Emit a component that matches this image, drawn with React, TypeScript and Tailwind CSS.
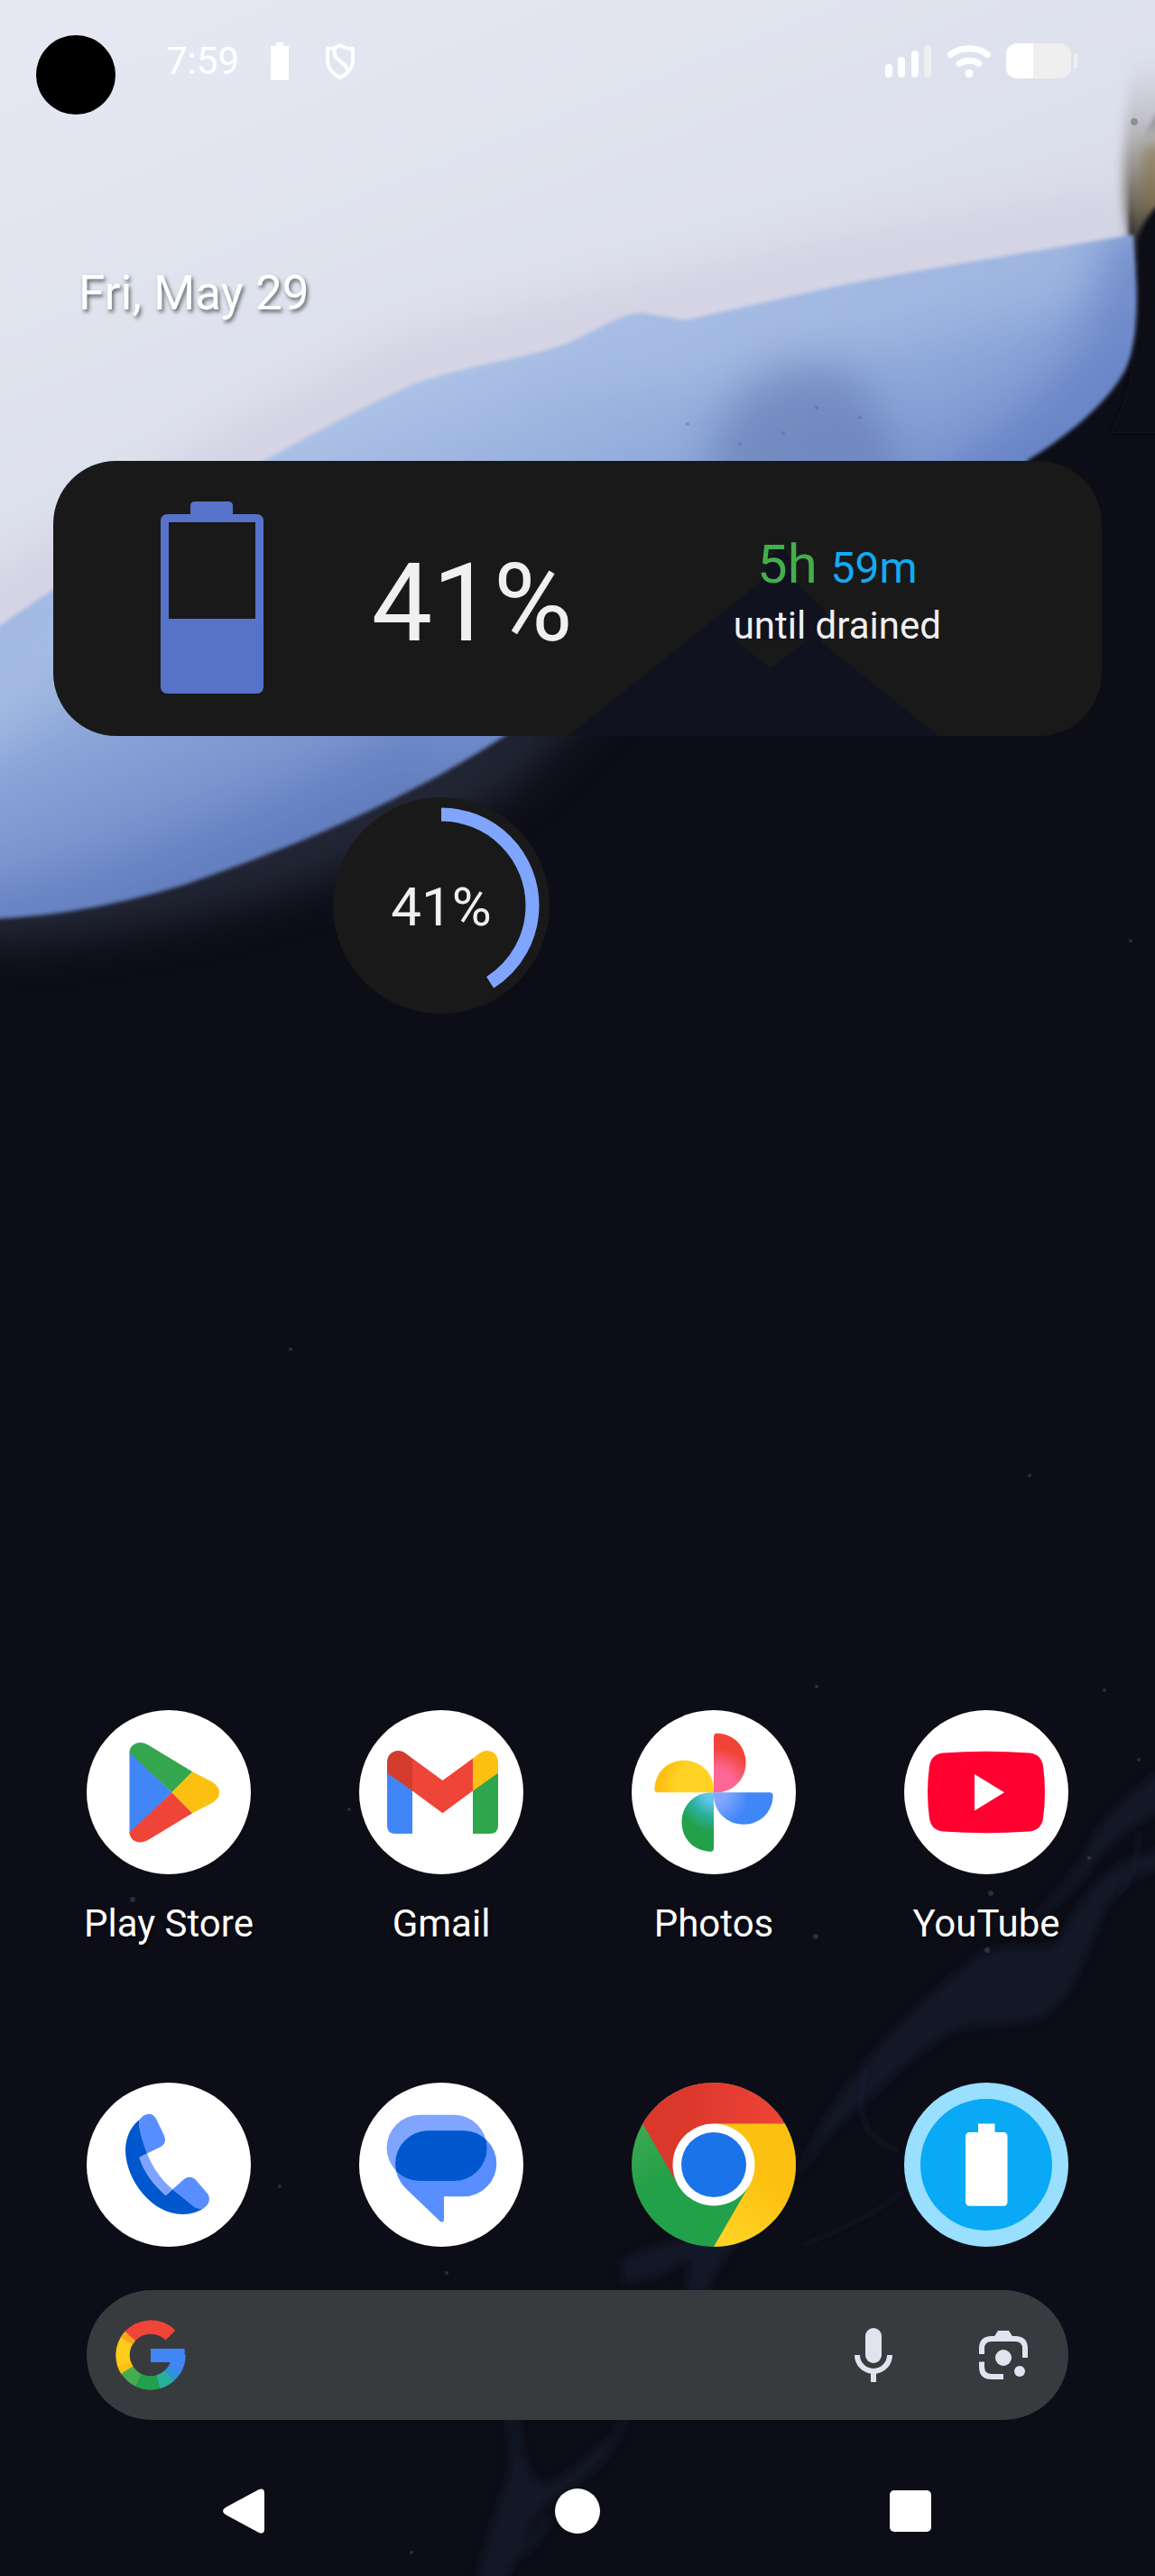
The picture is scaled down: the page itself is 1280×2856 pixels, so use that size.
const BATTERY_LEVEL = 41;

function Wallpaper() {
  return (
    <svg
      className="absolute inset-0 h-full w-full"
      viewBox="0 0 1280 2856"
      preserveAspectRatio="none"
      aria-hidden="true"
    >
      <defs>
        <linearGradient id="sky" x1="200" y1="0" x2="440" y2="600" gradientUnits="userSpaceOnUse">
          <stop offset="0" stopColor="#e5e8f3" />
          <stop offset="0.65" stopColor="#dee1ed" />
          <stop offset="1" stopColor="#d9dcea" />
        </linearGradient>
        <linearGradient id="wave" x1="380" y1="450" x2="560" y2="880" gradientUnits="userSpaceOnUse">
          <stop offset="0" stopColor="#adc2e6" />
          <stop offset="0.45" stopColor="#8ea8da" />
          <stop offset="0.85" stopColor="#6f8ac9" />
          <stop offset="1" stopColor="#617bb9" />
        </linearGradient>
        <linearGradient id="rock" x1="0" y1="60" x2="0" y2="290" gradientUnits="userSpaceOnUse">
          <stop offset="0" stopColor="#c9cbd8" stopOpacity="0" />
          <stop offset="0.4" stopColor="#b4b3b4" />
          <stop offset="0.75" stopColor="#6b6455" />
          <stop offset="1" stopColor="#14141d" />
        </linearGradient>
        <filter id="soft2" x="-20%" y="-20%" width="140%" height="140%">
          <feGaussianBlur stdDeviation="2" />
        </filter>
        <filter id="soft6" x="-20%" y="-20%" width="140%" height="140%">
          <feGaussianBlur stdDeviation="6" />
        </filter>
        <filter id="soft20" x="-60%" y="-60%" width="220%" height="220%" colorInterpolationFilters="sRGB">
          <feGaussianBlur stdDeviation="24" />
        </filter>
        <clipPath id="skyClip">
          <path d="M-40 -40 H1320 V100 C1262 120 1250 190 1252 270 L700 420 L200 700 L-40 760 Z" />
        </clipPath>
        <clipPath id="waveClip">
          <path d="M-40 720 C80 640 180 570 294 510 C360 473 410 448 457 426 C520 404 590 396 630 380 C670 362 690 347 712 347 L759 355 L906 322 C1020 298 1130 282 1256 260 C1262 330 1262 380 1246 412 C1225 450 1180 485 1139 510 L1080 640 L640 760 C570 812 510 848 457 875 C380 916 290 951 204 981 C130 1003 60 1018 -40 1020 Z" />
        </clipPath>
      </defs>

      <rect width="1280" height="2856" fill="#0d0d17" />

      {/* glow under the wave */}
      <path
        d="M-40 960 L200 950 L480 830 L700 740 L570 870 C430 970 180 1040 -40 1050 Z"
        fill="#232736"
        filter="url(#soft20)"
      />

      {/* bright upper half */}
      <g filter="url(#soft2)">
        <g clipPath="url(#skyClip)">
          <rect x="-40" y="-40" width="1360" height="820" fill="url(#sky)" />
          <path
            d="M-40 700 L294 490 L457 405 L640 360 L759 335 L906 302 L1260 240"
            fill="none"
            stroke="#d3d1e2"
            strokeWidth="60"
            filter="url(#soft20)"
          />
        </g>
      </g>

      {/* rocky edge */}
      <path d="M1256 60 H1300 V300 H1258 C1254 260 1244 240 1245 180 C1246 140 1250 100 1256 60 Z" fill="url(#rock)" filter="url(#soft6)" />
      <path d="M1270 160 C1264 200 1266 220 1276 240 L1286 230 V160 Z" fill="#8a713d" opacity="0.5" filter="url(#soft6)" />
      <circle cx="1257" cy="135" r="4" fill="#7a7a80" opacity="0.7" />
      <path d="M1260 266 C1266 246 1280 226 1300 216 V480 H1230 C1256 430 1262 380 1260 266 Z" fill="#0d0d17" filter="url(#soft2)" />

      {/* blue wave */}
      <g filter="url(#soft2)">
        <g clipPath="url(#waveClip)">
          <rect x="-40" y="240" width="1340" height="800" fill="url(#wave)" />
          <path d="M700 350 L1230 250 L1180 330 L800 420 L600 420 Z" fill="#a6bce4" opacity="0.6" filter="url(#soft20)" />
          <path d="M1290 250 V440 L1130 580 L990 640 L1060 510 C1150 440 1220 390 1236 260 Z" fill="#6480c4" opacity="0.7" filter="url(#soft20)" />
          <path d="M-60 1000 L100 970 L300 890 L480 800 V900 L200 1010 L-60 1060 Z" fill="#607bbb" opacity="0.6" filter="url(#soft20)" />
          <path d="M-60 740 L60 670 L140 680 L60 780 L-60 860 Z" fill="#abc0e5" opacity="0.6" filter="url(#soft20)" />
          <path d="M780 540 C790 450 840 400 910 405 C960 410 985 460 1000 540 Z" fill="#5a70a8" opacity="0.5" filter="url(#soft20)" />
        </g>
      </g>
      <g fill="#4b5f93" opacity="0.4">
        <circle cx="762" cy="470" r="2" />
        <circle cx="953" cy="463" r="2" />
        <circle cx="868" cy="480" r="2" />
        <circle cx="820" cy="492" r="2" />
        <circle cx="905" cy="452" r="2" />
      </g>

      {/* faint streaks in the lower right */}
      <g fill="#131a2e" filter="url(#soft6)" opacity="0.75">
        <path d="M1290 1960 C1250 1990 1215 2020 1200 2060 C1180 2090 1160 2110 1140 2130 C1165 2118 1185 2100 1200 2082 C1230 2040 1260 2020 1290 2006 Z" />
        <path d="M1290 2070 C1250 2080 1230 2100 1215 2140 C1200 2170 1195 2200 1170 2225 C1150 2250 1100 2240 1060 2250 C1020 2270 990 2300 960 2330 C930 2350 900 2390 880 2420 C905 2360 930 2320 965 2280 C1000 2240 1040 2200 1090 2165 C1120 2150 1160 2170 1175 2150 C1200 2100 1230 2060 1290 2050 Z" />
        <path d="M690 2505 C740 2480 800 2480 850 2440 C830 2480 790 2500 780 2560 H755 C760 2530 770 2510 760 2505 C740 2520 710 2530 690 2530 Z" />
        <path d="M572 2660 C575 2700 580 2740 600 2755 C630 2750 650 2720 680 2700 C690 2680 690 2660 700 2640 C700 2700 670 2740 610 2772 C590 2780 580 2830 555 2870 H525 C540 2820 550 2780 562 2750 C570 2720 560 2690 562 2660 Z" />
        <path d="M610 2790 C600 2830 575 2830 555 2850 C575 2820 590 2820 602 2790 Z" />
      </g>
      <g fill="none" stroke="#131a2e" strokeWidth="6" filter="url(#soft2)" opacity="0.5">
        <path d="M1262 2030 C1262 2060 1255 2080 1240 2100" />
        <path d="M960 2290 C945 2350 960 2370 995 2385" />
        <path d="M1000 2430 C965 2460 930 2470 890 2490" strokeWidth="4" />
      </g>

      <g fill="#9aa0b0" opacity="0.22">
        <circle cx="322" cy="1496" r="2" />
        <circle cx="1141" cy="1636" r="2" />
        <circle cx="1224" cy="1874" r="2" />
        <circle cx="147" cy="2106" r="3" />
        <circle cx="904" cy="2147" r="3" />
        <circle cx="1098" cy="2099" r="3" />
        <circle cx="1262" cy="1951" r="2" />
        <circle cx="1094" cy="2162" r="3" />
        <circle cx="1253" cy="1043" r="2" />
        <circle cx="905" cy="1870" r="2" />
        <circle cx="495" cy="2520" r="2" />
        <circle cx="456" cy="2830" r="2" />
        <circle cx="1207" cy="2060" r="2" />
        <circle cx="310" cy="2424" r="2" />
        <circle cx="387" cy="2006" r="2" />
      </g>
    </svg>
  );
}

function StatusBar() {
  return (
    <header className="flex items-start pt-[39px] pr-[85px] pl-10">
      <div className="size-[88px] shrink-0 rounded-full bg-black" />
      <div className="ml-14 flex h-[58px] flex-1 items-center justify-between">
        <div className="flex items-center">
          <time className="text-[42px] leading-[48px]">7:59</time>
          <svg className="ml-8 h-[42px] w-[26px]" viewBox="0 0 26 42" fill="#fff" aria-label="Battery">
            <path d="M9 0h8v4h6v37H3V4h6Z" />
            <path d="M0 41h26l-4 1H4Z" opacity="0.7" />
          </svg>
          <svg className="ml-9 h-[42px] w-[36px]" viewBox="0 0 36 42" fill="none" stroke="#fff" strokeWidth="4" strokeLinejoin="round" aria-label="Protected">
            <path d="M18 3 C22 6 28 7 32 7 V20 C32 29 25 36 18 39 C11 36 4 29 4 20 V7 C8 7 14 6 18 3 Z" />
            <path d="M12 6 C10 14 13 17 18 21 C24 26 27 28 26 33" />
          </svg>
        </div>
        <div className="flex items-center">
          <svg className="h-[36px] w-[52px]" viewBox="0 0 52 36" fill="#fff" aria-label="Mobile signal">
            <rect x="0" y="21" width="8" height="15" rx="4" />
            <rect x="14" y="13" width="8" height="23" rx="4" />
            <rect x="29" y="6" width="8" height="30" rx="4" />
            <rect x="43" y="0" width="8" height="36" rx="4" fill="#efeff0" />
          </svg>
          <svg className="ml-4 h-[36px] w-[50px]" viewBox="0 0 50 36" fill="none" stroke="#fff" strokeLinecap="round" aria-label="Wi-Fi">
            <path d="M4.500 10.500 C16 1.500 34 1.500 45.500 10.500" strokeWidth="7" />
            <path d="M14 20.500 C20 16 30 16 36 20.500" strokeWidth="7" />
            <circle cx="25" cy="31.500" r="4.500" fill="#fff" stroke="none" />
          </svg>
          <svg className="ml-4 h-[40px] w-[80px]" viewBox="0 0 80 40" aria-label="Phone battery">
            <rect width="72" height="39" rx="12" fill="#efefef" />
            <path d="M30 0H12A12 12 0 0 0 0 12V27A12 12 0 0 0 12 39H30Z" fill="#fff" />
            <path d="M75 11h2a2 2 0 0 1 2 2v13a2 2 0 0 1-2 2h-2Z" fill="#efefef" />
          </svg>
        </div>
      </div>
    </header>
  );
}

function BatteryCard() {
  return (
    <section className="relative mx-[59px] mt-[154px] grid h-[305px] grid-cols-[71fr_43fr_118fr] items-start overflow-hidden rounded-[70px] bg-[#191919] pt-[45px] text-[#f0f0f0]">
      <svg className="absolute inset-0 h-full w-full" viewBox="0 0 1162 305" preserveAspectRatio="none" aria-hidden="true">
        <path d="M571 305 L784 134 L794 108 L806 97 L816 106 L818 130 L856 166 L851 201 L981 305 Z" fill="#10121f" />
        <path d="M756 199 L795 230 L836 199 Z" fill="#191919" />
      </svg>
      <svg className="relative mx-auto h-[213px] w-[114px]" viewBox="0 0 114 213" fill="#5673c9" aria-label="Battery level">
        <path d="M33 14V5Q33 0 38 0H75Q80 0 80 5V14H106Q114 14 114 22V205Q114 213 106 213H8Q0 213 0 205V22Q0 14 8 14Z" />
        <rect x="9" y="23" width="96" height="107" fill="#191919" />
      </svg>
      <p className="relative mt-[53px] flex justify-center text-[120px] leading-[120px] whitespace-nowrap">{BATTERY_LEVEL}%</p>
      <div className="relative mt-[38px] flex flex-col gap-2 text-center">
        <p className="text-[60px] leading-[64px]">
          <span className="text-[#43ae4c]">5h</span> <span className="text-5xl leading-[64px] text-[#14aaf2]">59m</span>
        </p>
        <p className="text-[42px] leading-[48px]">until drained</p>
      </div>
    </section>
  );
}

function BatteryRing() {
  return (
    <section className="relative mt-[68px] ml-[369px] flex size-[240px] items-center justify-center rounded-full bg-[#191919]">
      <svg className="absolute inset-0 -rotate-90" viewBox="0 0 240 240" fill="none" aria-hidden="true">
        <circle cx="120" cy="120" r="101" stroke="#7fa5ff" strokeWidth="15" pathLength="100" strokeDasharray={`${BATTERY_LEVEL} 100`} />
      </svg>
      <p className="pt-1 text-[60px] leading-[64px] text-[#f0f0f0]">{BATTERY_LEVEL}%</p>
    </section>
  );
}

function PlayStoreIcon() {
  return (
    <svg viewBox="0 0 182 182" aria-hidden="true">
      <circle cx="91" cy="91" r="91" fill="#fff" />
      <path d="M47.500 46 L94.500 91.300 L47.500 137 Z" fill="#4086f7" />
      <path d="M47.500 47 C48 37 59 33 68 38.500 L117.200 68.300 L94.500 91.300 Z" fill="#34a64d" />
      <path d="M47.500 135.600 C48 145.600 59 149.600 68 144.100 L117.200 114.300 L94.500 91.300 Z" fill="#ef4438" />
      <path d="M117.200 68.300 L139 79.500 Q147 84.500 147 91.300 Q147 98.100 139 103.100 L117.200 114.300 L94.500 91.300 Z" fill="#fcc010" />
    </svg>
  );
}

function GmailIcon() {
  return (
    <svg viewBox="0 0 182 182" aria-hidden="true">
      <circle cx="91" cy="91" r="91" fill="#fff" />
      <path d="M31 69 L59 89 V137 H40 Q31 137 31 128 Z" fill="#4086f7" />
      <path d="M154 69 L126 89 V137 H145 Q154 137 154 128 Z" fill="#2fa54c" />
      <path d="M59 53.500 L92.500 78 L126 53.500 V89.500 L92.500 114.300 L59 89.500 Z" fill="#ef4438" />
      <path d="M31 69.700 V58 C31 46 44 41 53 49 L59 53.500 V89.500 Z" fill="#d33c2c" />
      <path d="M154 69.700 V58 C154 46 141 41 132 49 L126 53.500 V89.500 Z" fill="#fcc010" />
    </svg>
  );
}

const PETAL = "M91 91.300 V29.500 Q91 25.700 94.500 25.700 C113 26 126.500 40 126.500 58.500 C126.500 77 112 91.300 94 91.300 Z";

function PhotosIcon() {
  return (
    <svg viewBox="0 0 182 182" aria-hidden="true">
      <defs>
        <radialGradient id="petalRed" cx="91" cy="91" r="66" gradientUnits="userSpaceOnUse">
          <stop offset="0.4" stopColor="#ff6796" />
          <stop offset="0.75" stopColor="#f04438" />
        </radialGradient>
        <radialGradient id="petalBlue" cx="91" cy="91" r="66" gradientUnits="userSpaceOnUse">
          <stop offset="0.2" stopColor="#82a6ff" />
          <stop offset="0.6" stopColor="#4086f7" />
        </radialGradient>
        <radialGradient id="petalGreen" cx="91" cy="91" r="66" gradientUnits="userSpaceOnUse">
          <stop offset="0.15" stopColor="#64c6ee" />
          <stop offset="0.4" stopColor="#2bb09c" />
          <stop offset="0.65" stopColor="#23a04a" />
        </radialGradient>
        <radialGradient id="petalYellow" cx="91" cy="91" r="66" gradientUnits="userSpaceOnUse">
          <stop offset="0.65" stopColor="#ffd223" />
          <stop offset="0.9" stopColor="#fcc010" />
        </radialGradient>
      </defs>
      <circle cx="91" cy="91" r="91" fill="#fff" />
      <path d={PETAL} fill="url(#petalRed)" />
      <path d={PETAL} fill="url(#petalBlue)" transform="rotate(90 91 91.300)" />
      <path d={PETAL} fill="url(#petalGreen)" transform="rotate(180 91 91.300)" />
      <path d={PETAL} fill="url(#petalYellow)" transform="rotate(270 91 91.300)" />
    </svg>
  );
}

function YouTubeIcon() {
  return (
    <svg viewBox="0 0 182 182" aria-hidden="true">
      <circle cx="91" cy="91" r="91" fill="#fff" />
      <path d="M43 47.500 Q91 44 139 47.500 Q152 49 154 62 Q158 91 154 120 Q152 133 139 134.500 Q91 138 43 134.500 Q30 133 28 120 Q24 91 28 62 Q30 49 43 47.500 Z" fill="#ff0030" />
      <path d="M78 71 L111 91.300 L78 111.500 Z" fill="#fff" />
    </svg>
  );
}

function PhoneIcon() {
  return (
    <svg viewBox="0 0 182 182" aria-hidden="true">
      <circle cx="91" cy="91" r="91" fill="#fff" />
      <path d="M58.600 41 C48 49 43 62 43 76 C44 108 72 146 106.400 146 C116 146 124 143 130 139 C127 140 122 139 119 137 L95.300 118.300 L87.600 125 C74 113 63 98 58.600 83 L67 78.500 L58.600 50 Z" fill="#0057ce" />
      <path d="M58.600 83 L67 78.500 C73 94 83 108 95.300 118.300 L87.600 125 C74 113 63 98 58.600 83 Z" fill="#7fa4ff" />
      <path d="M58.600 41 C65 33 73 33 77 40 L86 58.700 C88 64 86.500 68.500 82.500 71 L67 78.500 C62 66 57.500 54 58.600 41 Z" fill="#588eff" />
      <path d="M95.300 118.300 L107.500 107.500 C112 103.500 118 104 121.500 108.500 L133.500 122.500 C138 128 136 135 130 139 C126 141 121 139.500 118 137 Z" fill="#588eff" />
    </svg>
  );
}

function MessagesIcon() {
  return (
    <svg viewBox="0 0 182 182" aria-hidden="true">
      <defs>
        <clipPath id="backBubble">
          <rect x="30.600" y="35.700" width="111" height="73.300" rx="36.600" />
        </clipPath>
      </defs>
      <circle cx="91" cy="91" r="91" fill="#fff" />
      <path d="M67.200 109 A36.600 36.600 0 0 1 67.200 35.700 H105 A36.600 36.600 0 0 1 105 109 Z" fill="#7fa5ff" />
      <path d="M76.700 53.300 H115.800 A36.500 36.500 0 0 1 115.800 126.300 H94 V152 Q94 156 90 154 L52.400 118 C44 109 40.200 101 40.200 90 A36.500 36.500 0 0 1 76.700 53.300 Z" fill="#588eff" />
      <path d="M76.700 53.300 H115.800 A36.500 36.500 0 0 1 115.800 126.300 H76.700 A36.500 36.500 0 0 1 76.700 53.300 Z" fill="#0057ce" clipPath="url(#backBubble)" />
    </svg>
  );
}

function ChromeIcon() {
  return (
    <svg viewBox="0 0 182 182" aria-hidden="true">
      <defs>
        <linearGradient id="chromeRed" x1="0" x2="1">
          <stop offset="0.3" stopColor="#dc372b" />
          <stop offset="1" stopColor="#ef4438" />
        </linearGradient>
        <linearGradient id="chromeYellow" x1="0.800" y1="0" x2="0.300" y2="1">
          <stop offset="0.4" stopColor="#fcc010" />
          <stop offset="1" stopColor="#ffd223" />
        </linearGradient>
        <linearGradient id="chromeGreen" x1="0" y1="0.200" x2="0.400" y2="0.800">
          <stop offset="0" stopColor="#40ab4f" />
          <stop offset="0.6" stopColor="#23a04a" />
        </linearGradient>
      </defs>
      <circle cx="91" cy="91" r="91" fill="url(#chromeGreen)" />
      <path d="M12.200 45.500 A91 91 0 0 1 169.800 45.500 H91 L51.600 113.750 Z" fill="url(#chromeRed)" />
      <path d="M169.800 45.500 A91 91 0 0 1 91 182 L130.400 113.750 L91 45.500 Z" fill="url(#chromeYellow)" />
      <circle cx="91" cy="91" r="45.500" fill="#fff" />
      <circle cx="91" cy="91" r="36" fill="#1a73e8" />
    </svg>
  );
}

function BatteryAppIcon() {
  return (
    <svg viewBox="0 0 182 182" aria-hidden="true">
      <circle cx="91" cy="91" r="91" fill="#99dfff" />
      <circle cx="91" cy="91" r="73" fill="#09a9f5" />
      <path d="M82 45.500 H100.500 V55 H110 Q114.500 55 114.500 60 V132 Q114.500 136.700 110 136.700 H73 Q68 136.700 68 132 V60 Q68 55 73 55 H82 Z" fill="#fff" />
    </svg>
  );
}

const apps = [
  { name: "Play Store", Icon: PlayStoreIcon },
  { name: "Gmail", Icon: GmailIcon },
  { name: "Photos", Icon: PhotosIcon },
  { name: "YouTube", Icon: YouTubeIcon },
];

const dock = [
  { name: "Phone", Icon: PhoneIcon },
  { name: "Messages", Icon: MessagesIcon },
  { name: "Chrome", Icon: ChromeIcon },
  { name: "Battery", Icon: BatteryAppIcon },
];

function SearchBar() {
  return (
    <form className="mx-24 mt-12 flex h-36 items-center rounded-full bg-[#383b3d] pr-[45px] pl-8">
      <svg className="size-[78px] shrink-0" viewBox="0 0 78 78" fill="none" strokeWidth="15.400" aria-hidden="true">
        <path d="M13.600 56.800 A31 31 0 0 1 15.300 19.100" stroke="#ffcc1b" />
        <path d="M9.600 49 A31 31 0 0 0 13.600 56.800" stroke="#fcc010" />
        <path d="M12.200 23.500 A31 31 0 0 1 17 17.300" stroke="#fba51c" />
        <path d="M16.300 18 A31 31 0 0 1 60.900 17.100" stroke="#f1443a" />
        <path d="M13 55.500 A31 31 0 0 0 25.900 67.100" stroke="#45ad50" />
        <path d="M25.400 66.900 A31 31 0 0 0 47 68.900" stroke="#22a04b" />
        <path d="M47 68.900 A31 31 0 0 0 60 61.700" stroke="#28b09c" />
        <path d="M59.600 62 A31 31 0 0 0 65.800 54.500" stroke="#2c92dc" />
        <path d="M65.300 55.400 A31 31 0 0 0 70 39" stroke="#4086f7" />
        <path d="M39 32 H76.700 V40 L74 47 H39 Z" fill="#4086f7" stroke="none" />
      </svg>
      <input type="search" aria-label="Search" className="h-full min-w-0 flex-1 bg-transparent px-6 text-[42px] outline-none" />
      <button type="button" aria-label="Voice search" className="shrink-0">
        <svg className="h-[60px] w-[42px]" viewBox="0 0 42 60" fill="#e2e3ef">
          <rect x="12" y="0" width="18" height="39" rx="9" />
          <path d="M3 30 A18 18 0 0 0 39 30" fill="none" stroke="#e2e3ef" strokeWidth="6" />
          <rect x="18" y="48" width="6" height="12" />
        </svg>
      </button>
      <button type="button" aria-label="Search with camera" className="ml-24 shrink-0">
        <svg className="size-[54px]" viewBox="0 0 54 54" fill="none" stroke="#e2e3ef" strokeWidth="6">
          <path d="M3 26 V20 Q3 9 14 9 H40 Q51 9 51 20 V30" />
          <path d="M3 34.500 V40 Q3 51 14 51 H27" />
          <path d="M16.500 7 L21 0 H33 L37.500 7 Z" fill="#e2e3ef" stroke="none" />
          <circle cx="27" cy="30" r="9" fill="#e2e3ef" stroke="none" />
          <circle cx="45" cy="45" r="6" fill="#e2e3ef" stroke="none" />
        </svg>
      </button>
    </form>
  );
}

function NavBar() {
  return (
    <nav className="flex justify-between px-[246px] pt-[76px] pb-[47px]">
      <button type="button" aria-label="Back">
        <svg className="size-[50px]" viewBox="0 0 50 50" fill="#fff">
          <path d="M41 1 Q47 -1 47 5 V45 Q47 51 41 49 L4 29 Q-2 25 4 21 Z" />
        </svg>
      </button>
      <button type="button" aria-label="Home">
        <svg className="size-[50px]" viewBox="0 0 50 50" fill="#fff">
          <circle cx="25" cy="25" r="25" />
        </svg>
      </button>
      <button type="button" aria-label="Recent apps">
        <svg className="size-[50px]" viewBox="0 0 50 50" fill="#fff">
          <rect x="2" y="2" width="46" height="46" rx="5" />
        </svg>
      </button>
    </nav>
  );
}

export default function App() {
  return (
    <div className="relative min-h-screen overflow-hidden bg-[#0d0d17] font-['Roboto',sans-serif] text-white">
      <Wallpaper />

      <div className="relative flex min-h-screen flex-col">
        <StatusBar />
        <p className="mt-[166px] pl-[87px] text-[53px] leading-[64px] [text-shadow:2px_3px_4px_rgba(0,0,0,0.55)]">Fri, May 29</p>
        <BatteryCard />
        <BatteryRing />

        <main className="mt-auto grid grid-cols-4 px-9 pt-24">
          {apps.map(({ name, Icon }) => (
            <a key={name} href="#" className="flex flex-col items-center gap-[31px]">
              <span className="size-[182px] [&>svg]:size-full">
                <Icon />
              </span>
              <span className="text-[42px] leading-[48px] [text-shadow:1px_2px_3px_rgba(0,0,0,0.8)]">{name}</span>
            </a>
          ))}
        </main>

        {/* dock */}
        <div className="mt-[152px] grid grid-cols-4 px-9">
          {dock.map(({ name, Icon }) => (
            <a key={name} href="#" aria-label={name} className="mx-auto size-[182px] [&>svg]:size-full">
              <Icon />
            </a>
          ))}
        </div>

        <SearchBar />
        <NavBar />
      </div>
    </div>
  );
}
